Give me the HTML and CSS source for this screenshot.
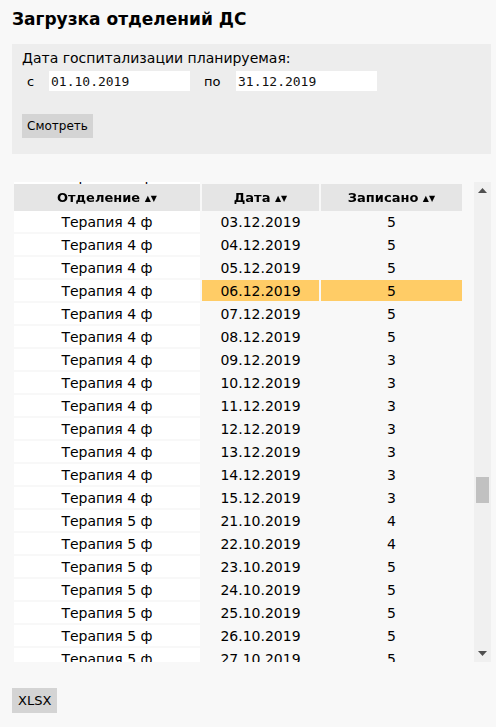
FILE: index.html
```html
<!DOCTYPE html>
<html lang="ru">
<head>
    <meta charset="UTF-8">
    <title>Загрузка отделений ДС</title>
    <link rel="stylesheet" href="styles.css">
</head>
<body>
    <h1 class="page-title">Загрузка отделений ДС</h1>
    <div class="filter">
        <div class="filter-label">Дата госпитализации планируемая:</div>
        <div class="filter-dates">
            <label class="date-label" for="date-from">с</label>
            <input class="date-input" id="date-from" type="text" value="01.10.2019">
            <label class="date-label" for="date-to">по</label>
            <input class="date-input" id="date-to" type="text" value="31.12.2019">
        </div>
        <button class="btn" id="show">Смотреть</button>
    </div>
    <div class="grid-box">
        <div class="grid-wrap" id="grid">
            <table class="grid">
                <thead>
                    <tr>
                        <th class="col-dept">Отделение <span class="sort">▲▼</span></th>
                        <th class="col-date">Дата <span class="sort">▲▼</span></th>
                        <th class="col-count">Записано <span class="sort">▲▼</span></th>
                    </tr>
                </thead>
                <tbody id="rows"></tbody>
            </table>
        </div>
        <div class="vscroll">
            <div class="vscroll-btn">
                <svg width="9" height="5" viewBox="0 0 9 5"><polygon points="4.5,0 9,5 0,5" fill="#505050"/></svg>
            </div>
            <div class="vscroll-track" id="track">
                <div class="vscroll-thumb" id="thumb"></div>
            </div>
            <div class="vscroll-btn">
                <svg width="9" height="5" viewBox="0 0 9 5"><polygon points="0,0 9,0 4.5,5" fill="#505050"/></svg>
            </div>
        </div>
    </div>
    <button class="btn btn-xlsx" id="xlsx">XLSX</button>
    <script src="app.js"></script>
</body>
</html>
```

FILE: styles.css
```css
body{
    margin: 0;
    padding: 0 5px 0 12px;
    background-color: #f8f8f8;
    font-family: "DejaVu Sans", Verdana, sans-serif;
    font-size: 13px;
    color: #000;
}
.page-title{
    margin: 0;
    padding: 9px 0 15px;
    font-size: 17px;
    font-weight: bold;
}
.filter{
    background-color: #ededed;
    padding: 5px 10px 16px;
}
.filter-label{
    font-size: 14px;
    line-height: 18px;
}
.filter-dates{
    display: flex;
    align-items: center;
    margin-top: 4px;
}
.date-label{
    width: 27px;
    padding-left: 5px;
    box-sizing: border-box;
}
.date-label + .date-input + .date-label{
    margin-left: 14px;
    width: 32px;
    padding-left: 0;
}
.date-input{
    width: 141px;
    height: 20px;
    box-sizing: border-box;
    border: 0;
    padding: 0 2px;
    background-color: #fff;
    font-family: "DejaVu Sans Mono", monospace;
    font-size: 13px;
    color: #111;
    outline: none;
}
.btn{
    display: block;
    margin-top: 23px;
    height: 24px;
    padding: 0 5px;
    border: 0;
    border-radius: 0;
    background-color: #d4d4d4;
    font-family: "DejaVu Sans", Verdana, sans-serif;
    font-size: 12px;
    color: #000;
    cursor: pointer;
}
.grid-box{
    display: flex;
    margin-top: 28px;
    height: 480px;
}
.grid-wrap{
    flex: 1;
    overflow-y: scroll;
    scrollbar-width: none;
}
.grid-wrap::-webkit-scrollbar{
    display: none;
}
.grid{
    width: 452px;
    border-collapse: separate;
    border-spacing: 2px;
    table-layout: fixed;
}
.grid thead{
    position: sticky;
    top: 2px;
}
.grid th{
    height: 27px;
    padding: 0;
    background-color: #e5e5e5;
    font-size: 13px;
    font-weight: bold;
}
.grid .col-dept{
    width: 186px;
}
.grid .col-date{
    width: 117px;
}
.sort{
    font-size: 8px;
    vertical-align: middle;
}
.grid td{
    height: 21px;
    padding: 0;
    text-align: center;
    font-size: 14px;
}
.grid td.dept{
    background-color: #fff;
}
.grid tr.is-active td:not(.dept){
    background-color: #ffcc66;
}
.vscroll{
    width: 17px;
    display: flex;
    flex-direction: column;
    background-color: #f0f0f0;
}
.vscroll-btn{
    height: 17px;
    display: flex;
    justify-content: center;
    align-items: center;
}
.vscroll-track{
    flex: 1;
    padding: 0 2px;
}
.vscroll-thumb{
    background-color: #c1c1c1;
    height: 26px;
}
.btn-xlsx{
    margin-top: 26px;
    height: 25px;
    padding: 0 6px;
    font-size: 13px;
}
```

FILE: app.js
```js
// строки отчёта: отделение, дата, записано
function pad(n){
    return n < 10 ? '0' + n : '' + n;
}
function fmt(d){
    return pad(d.getDate()) + '.' + pad(d.getMonth() + 1) + '.' + d.getFullYear();
}
function days(y, m, d, n){
    let out = [];
    for(let i = 0; i < n; i++){
        out.push(fmt(new Date(y, m - 1, d + i)));
    }
    return out;
}

let data = [];
function add(dept, dates, counts){
    dates.forEach((dt, i)=>{
        let c = counts ? counts[i] : 1 + ((i * 7 + dept.length) % 5);
        data.push([dept, dt, c]);
    });
}

add('Кардиология 1 ф', days(2019, 10, 1, 46));
add('Кардиология 2 ф', days(2019, 10, 3, 44));
add('Неврология 1 ф', days(2019, 10, 1, 45));
add('Неврология 2 ф', days(2019, 10, 7, 25));
add('Терапия 4 ф', days(2019, 10, 1, 63));
add('Терапия 4 ф',
    ['03.12.2019','04.12.2019','05.12.2019','06.12.2019','07.12.2019','08.12.2019','09.12.2019',
     '10.12.2019','11.12.2019','12.12.2019','13.12.2019','14.12.2019','15.12.2019'],
    [5,5,5,5,5,5,3,3,3,3,3,3,3]);
add('Терапия 5 ф',
    ['21.10.2019','22.10.2019','23.10.2019','24.10.2019','25.10.2019','26.10.2019','27.10.2019'],
    [4,4,5,5,5,5,5]);
add('Терапия 5 ф', days(2019, 10, 28, 50));
add('Хирургия 1 ф', days(2019, 10, 1, 64));

let tbody = document.querySelector('#rows');
let html = '';
data.forEach((r)=>{
    let cls = (r[0] == 'Терапия 4 ф' && r[1] == '06.12.2019') ? ' class="is-active"' : '';
    html += `<tr${cls}><td class="dept">${r[0]}</td><td>${r[1]}</td><td>${r[2]}</td></tr>`;
});
tbody.innerHTML = html;

let grid = document.querySelector('#grid');
let track = document.querySelector('#track');
let thumb = document.querySelector('#thumb');

// свой скроллбар: размер и положение бегунка
function syncThumb(){
    let th = Math.max(20, Math.round(track.clientHeight * grid.clientHeight / grid.scrollHeight));
    let max = grid.scrollHeight - grid.clientHeight;
    let top = max > 0 ? Math.round((track.clientHeight - th) * grid.scrollTop / max) : 0;
    thumb.style.height = th + 'px';
    thumb.style.marginTop = top + 'px';
}
grid.addEventListener('scroll', syncThumb);

let first = [...tbody.rows].find((tr)=>tr.cells[0].innerText == 'Терапия 4 ф' && tr.cells[1].innerText == '03.12.2019');
grid.scrollTop = first.getBoundingClientRect().top - grid.getBoundingClientRect().top - 29;
syncThumb();
```
